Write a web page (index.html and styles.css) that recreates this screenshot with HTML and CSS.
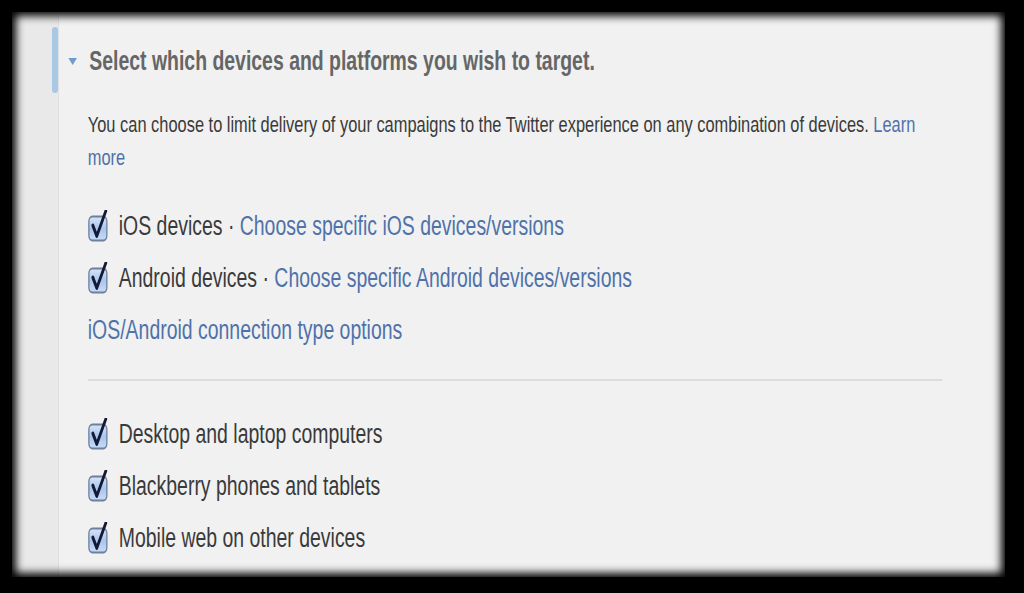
FILE: index.html
```html
<!DOCTYPE html>
<html lang="en">
<head>
  <meta charset="UTF-8" />
  <meta name="viewport" content="width=device-width, initial-scale=1.0" />
  <title>Device targeting</title>
  <link rel="stylesheet" href="styles.css">
</head>
<body>
  <div class="panel">
    <div class="gutter">
      <div class="active-bar"></div>
    </div>
    <div class="section">
      <div class="squeeze">
        <div class="section-head">
          <span class="caret"></span>
          <h2>Select which devices and platforms you wish to target.</h2>
        </div>
        <div class="section-body">
          <p class="intro">You can choose to limit delivery of your campaigns to the Twitter experience on any combination of devices. <a href="#">Learn</a> <a href="#">more</a></p>

          <label class="option">
            <svg class="check" viewBox="0 0 28 32" preserveAspectRatio="none"><defs><linearGradient id="cb" x1="0" y1="0" x2="0" y2="1"><stop offset="0" stop-color="#d6e5fa"/><stop offset="0.5" stop-color="#a9c6ef"/><stop offset="1" stop-color="#c7dbf7"/></linearGradient></defs><rect x="1.5" y="6.5" width="25" height="24" rx="5" fill="url(#cb)" stroke="#6f7f9c" stroke-width="1.8"/><path d="M7 15.5 L12.5 26 L25 1" fill="none" stroke="#141a33" stroke-width="3.8" stroke-linejoin="round" stroke-linecap="round"/></svg>
            <span>iOS devices · <a href="#">Choose specific iOS devices/versions</a></span>
          </label>
          <label class="option">
            <svg class="check" viewBox="0 0 28 32" preserveAspectRatio="none"><rect x="1.5" y="6.5" width="25" height="24" rx="5" fill="url(#cb)" stroke="#6f7f9c" stroke-width="1.8"/><path d="M7 15.5 L12.5 26 L25 1" fill="none" stroke="#141a33" stroke-width="3.8" stroke-linejoin="round" stroke-linecap="round"/></svg>
            <span>Android devices · <a href="#">Choose specific Android devices/versions</a></span>
          </label>
          <div class="option"><a href="#">iOS/Android connection type options</a></div>

          <hr>

          <label class="option">
            <svg class="check" viewBox="0 0 28 32" preserveAspectRatio="none"><rect x="1.5" y="6.5" width="25" height="24" rx="5" fill="url(#cb)" stroke="#6f7f9c" stroke-width="1.8"/><path d="M7 15.5 L12.5 26 L25 1" fill="none" stroke="#141a33" stroke-width="3.8" stroke-linejoin="round" stroke-linecap="round"/></svg>
            <span>Desktop and laptop computers</span>
          </label>
          <label class="option">
            <svg class="check" viewBox="0 0 28 32" preserveAspectRatio="none"><rect x="1.5" y="6.5" width="25" height="24" rx="5" fill="url(#cb)" stroke="#6f7f9c" stroke-width="1.8"/><path d="M7 15.5 L12.5 26 L25 1" fill="none" stroke="#141a33" stroke-width="3.8" stroke-linejoin="round" stroke-linecap="round"/></svg>
            <span>Blackberry phones and tablets</span>
          </label>
          <label class="option">
            <svg class="check" viewBox="0 0 28 32" preserveAspectRatio="none"><rect x="1.5" y="6.5" width="25" height="24" rx="5" fill="url(#cb)" stroke="#6f7f9c" stroke-width="1.8"/><path d="M7 15.5 L12.5 26 L25 1" fill="none" stroke="#141a33" stroke-width="3.8" stroke-linejoin="round" stroke-linecap="round"/></svg>
            <span>Mobile web on other devices</span>
          </label>
        </div>
      </div>
    </div>
  </div>
</body>
</html>
```

FILE: styles.css
```css
html, body {
  margin: 0;
  height: 100%;
}
body {
  background: #000;
  padding: 12px 19px 16px 12px;
  box-sizing: border-box;
  font-family: "Liberation Sans", Arial, sans-serif;
  overflow: hidden;
}
.panel {
  position: relative;
  height: 100%;
  display: flex;
  background: #f1f1f1;
  overflow: hidden;
}
/* soft black vignette over the edges */
.panel::after {
  content: "";
  position: absolute;
  inset: 0;
  box-shadow: inset 0 0 9px 4px #000;
  pointer-events: none;
}
.gutter {
  width: 46px;
  flex-shrink: 0;
  background: #e9e9ea;
  display: flex;
  flex-direction: column;
  align-items: flex-end;
}
.active-bar {
  width: 6px;
  height: 66px;
  margin-top: 15px;
  background: #a9c8e6;
  border-radius: 3px;
}
.section {
  flex: 1;
  border-left: 1px solid #e0e0e0;
  overflow: hidden;
}
/* the capture is squeezed sideways, so the content is too */
.squeeze {
  width: calc(100% / 0.72);
  transform: scaleX(0.72);
  transform-origin: 0 0;
}
.section-head {
  display: flex;
  align-items: center;
  height: 32px;
  margin-top: 33px;
  padding-left: 13px;
}
.caret {
  width: 0;
  height: 0;
  border-left: 6px solid transparent;
  border-right: 6px solid transparent;
  border-top: 7px solid #6f9bd0;
  margin-right: 17px;
}
h2 {
  margin: 0;
  font-size: 27px;
  line-height: 32px;
  font-weight: bold;
  color: #666;
}
.section-body {
  padding: 31px 87px 0 40px;
  color: #3a3a3a;
}
a {
  color: #4f72aa;
  text-decoration: none;
}
.intro {
  margin: 0 0 26px;
  font-size: 22.8px;
  line-height: 33px;
}
.option {
  display: flex;
  align-items: center;
  height: 52px;
  font-size: 27px;
  line-height: 52px;
}
.check {
  width: 28px;
  height: 32px;
  margin-right: 15px;
  flex-shrink: 0;
}
hr {
  border: 0;
  height: 2px;
  background: #dcdcdc;
  margin: 23px 0 27px;
}
```
